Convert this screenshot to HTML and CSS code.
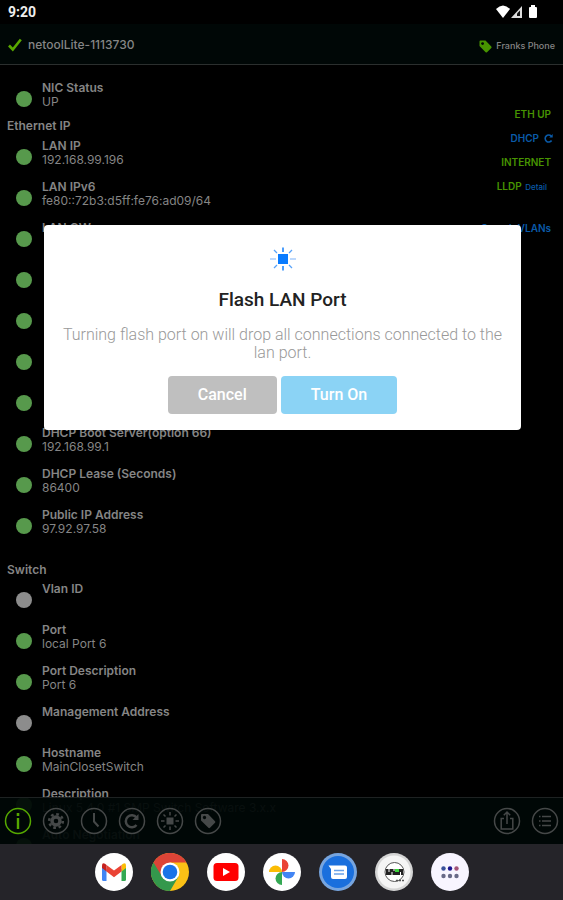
FILE: index.html
```html
<!DOCTYPE html>
<html lang="en">
<head>
<meta charset="utf-8">
<meta name="viewport" content="width=device-width, initial-scale=1">
<title>netoolLite</title>
<link rel="stylesheet" href="styles.css">
</head>
<body>
<div class="status-bar">
  <span>9:20</span>
  <svg class="status-icons" width="42" height="14" viewBox="0 0 42 14" fill="#fff">
    <path d="M0 4Q7-3 14 4L7 13Z"/>
    <path d="M26 1V13H15Z" fill="#ddd"/><path d="M24 5.500V11H21V8.500Z" fill="#111"/>
    <path d="M35 0h4v2h1q1 0 1 1v9q0 1-1 1h-6q-1 0-1-1V3q0-1 1-1h1z"/>
  </svg>
</div>
<header class="header">
  <svg width="14" height="14" viewBox="0 0 14 14"><path d="M1 7.500 4.800 11.500 12.800 1.500" fill="none" stroke="#58a800" stroke-width="2.600"/></svg>
  <h1 class="device">netoolLite-1113730</h1>
  <svg class="tag" width="13" height="13" viewBox="0 0 13 13"><path d="M1.500.500H6.500L12.300 6.500q.7.700 0 1.400L8 12.200q-.7.700-1.400 0L.500 6V1.500q0-1 1-1Z" fill="#479400"/><circle cx="3.600" cy="3.600" r="1.400" fill="#000706"/></svg>
  <span class="phone">Franks Phone</span>
</header>
<main class="content">
  <div class="info">
    <dl class="rows">
      <div class="row"><dt>NIC Status</dt><dd>UP</dd></div>
    </dl>
    <h2 class="section">Ethernet IP</h2>
    <dl class="rows">
      <div class="row"><dt>LAN IP</dt><dd>192.168.99.196</dd></div>
      <div class="row"><dt>LAN IPv6</dt><dd>fe80::72b3:d5ff:fe76:ad09/64</dd></div>
      <div class="row"><dt>LAN GW</dt><dd></dd></div>
      <div class="row"><dt></dt><dd></dd></div>
      <div class="row"><dt></dt><dd></dd></div>
      <div class="row"><dt></dt><dd></dd></div>
      <div class="row"><dt></dt><dd></dd></div>
      <div class="row"><dt>DHCP Boot Server(option 66)</dt><dd>192.168.99.1</dd></div>
      <div class="row"><dt>DHCP Lease (Seconds)</dt><dd>86400</dd></div>
      <div class="row"><dt>Public IP Address</dt><dd>97.92.97.58</dd></div>
    </dl>
    <h2 class="section section-gap">Switch</h2>
    <dl class="rows">
      <div class="row off"><dt>Vlan ID</dt><dd></dd></div>
      <div class="row"><dt>Port</dt><dd>local Port 6</dd></div>
      <div class="row"><dt>Port Description</dt><dd>Port 6</dd></div>
      <div class="row off"><dt>Management Address</dt><dd></dd></div>
      <div class="row"><dt>Hostname</dt><dd>MainClosetSwitch</dd></div>
      <div class="row"><dt>Description</dt><dd>Linux 5.4.0 #1 SMP Switch Software 3.x.x</dd></div>
      <div class="row"><dt>Auto Negotiation</dt><dd></dd></div>
    </dl>
  </div>
  <aside class="links">
    <span>ETH UP</span>
    <a href="#dhcp" class="dhcp">DHCP <svg width="9" height="9" viewBox="0 0 9 9"><path d="M7.300 2.200A3.500 3.500 0 1 0 7.600 6.500" fill="none" stroke="#0a5aa8" stroke-width="1.600"/><path d="M8.700 0V3.500H5.200Z" fill="#0a5aa8"/></svg></a>
    <span>INTERNET</span>
    <span class="lldp">LLDP <a href="#detail">Detail</a></span>
    <a href="#vlans" class="vlans">Search VLANs</a>
  </aside>
  <nav class="toolbar">
    <button class="tool active" aria-label="Info"><svg viewBox="0 0 28 28"><circle cx="14" cy="14" r="12.500"/><path d="M14 11V22" stroke-width="2.400"/><path d="M14 6v3" stroke-width="2.600"/></svg></button>
    <button class="tool" aria-label="Settings"><svg viewBox="0 0 28 28"><circle cx="14" cy="14" r="12.500"/><circle cx="14" cy="14" r="4" stroke-width="3.400"/><circle cx="14" cy="14" r="6.800" stroke-width="2.600" stroke-dasharray="2.670"/></svg></button>
    <button class="tool" aria-label="History"><svg viewBox="0 0 28 28"><circle cx="14" cy="14" r="12.500"/><path d="M14 6V14.500L18.500 19.500" stroke-width="2"/></svg></button>
    <button class="tool" aria-label="Reload"><svg viewBox="0 0 28 28"><circle cx="14" cy="14" r="12.500"/><path d="M18.500 10.500A6 6 0 1 0 18.500 18" stroke-width="2.500"/><path d="M20.500 7V13H14.500Z" class="solid"/></svg></button>
    <button class="tool" aria-label="Flash port"><svg viewBox="0 0 28 28"><circle cx="14" cy="14" r="12.500"/><path d="M10.500 10.500h7v7h-7z" class="solid"/><path d="M14 5v3.500M14 19.500V23M5 14h3.500M19.500 14H23M7.500 7.500l2 2M18.500 18.500l2 2M7.500 20.500l2-2M18.500 9.500l2-2"/></svg></button>
    <button class="tool" aria-label="Tag"><svg viewBox="0 0 28 28"><circle cx="14" cy="14" r="12.500"/><path fill-rule="evenodd" d="M8 7h6l7 7.200q.8.800 0 1.600L16 20.800q-.8.800-1.600 0L7 13.500V8q0-1 1-1Zm2.500 1.800a1.700 1.700 0 1 0 .01 0Z" class="solid"/></svg></button>
    <button class="tool push" aria-label="Share"><svg viewBox="0 0 28 28"><circle cx="14" cy="14" r="12.500"/><path d="M11 11.500H8.200V22H19.800V11.500H17M14 17V5.500M10.800 8.300 14 5l3.200 3.300"/></svg></button>
    <button class="tool" aria-label="Menu"><svg viewBox="0 0 28 28"><circle cx="14" cy="14" r="12.500"/><path d="M11 9.500h9M11 14h9M11 18.500h9M8 9.500h1.500M8 14h1.500M8 18.500h1.500"/></svg></button>
  </nav>
</main>
<footer class="dock">
  <button class="app" aria-label="Gmail"><svg viewBox="0 0 38 38"><circle cx="19" cy="19" r="19" fill="#fff"/><path d="M7 14 11.500 16V28H8.500Q7 28 7 26.500Z" fill="#4285f4"/><path d="M31 14 26.500 16V28h3Q31 28 31 26.500Z" fill="#34a853"/><path d="M26.500 12 28 10.800q3-1.500 3 2V15l-4.500 3.500Z" fill="#fbbc04"/><path d="M11.500 12 19 17.500 26.500 12V18.500L19 24.200 11.500 18.500Z" fill="#ea4335"/><path d="M7 12.800q0-3.500 3-2L11.500 12V18.500L7 15Z" fill="#c5221f"/></svg></button>
  <button class="app" aria-label="Chrome"><svg viewBox="0 0 38 38"><circle cx="19" cy="19" r="19" fill="#fbc116"/><path d="M19 19 2.500 9.500A19 19 0 0 0 19 38L27.500 23.500Z" fill="#34984c"/><path d="M2.500 9.500A19 19 0 0 1 35.500 9.500H19V19L11 23.500Z" fill="#dc4437"/><circle cx="19" cy="19" r="9.500" fill="#fff"/><circle cx="19" cy="19" r="7.300" fill="#1a73e8"/></svg></button>
  <button class="app" aria-label="YouTube"><svg viewBox="0 0 38 38"><circle cx="19" cy="19" r="19" fill="#fff"/><rect x="6.500" y="10" width="25" height="18" rx="3.500" fill="#f00"/><path d="M16 15v8l7-4z" fill="#fff"/></svg></button>
  <button class="app" aria-label="Photos"><svg viewBox="0 0 38 38"><circle cx="19" cy="19" r="19" fill="#fff"/><path d="M19 19V6A6.500 6.500 0 0 1 19 19" fill="#ea4335"/><path d="M19 19H32A6.500 6.500 0 0 1 19 19" fill="#4285f4"/><path d="M19 19V32A6.500 6.500 0 0 1 19 19" fill="#34a853"/><path d="M19 19H6A6.500 6.500 0 0 1 19 19" fill="#fbbc04"/></svg></button>
  <button class="app" aria-label="Messages"><svg viewBox="0 0 38 38"><circle cx="19" cy="19" r="19" fill="#77a5df"/><circle cx="19" cy="19" r="16" fill="#1a6fdd"/><path d="M9.500 12.500H26q2 0 2 2V24q0 2-2 2H14q-2 0-2-2V16Z" fill="#fff"/><path d="M15 17.500h10M15 21h10" stroke="#6aa3ea" stroke-width="1.300"/></svg></button>
  <button class="app" aria-label="netool"><svg viewBox="0 0 38 38"><circle cx="19" cy="19" r="19" fill="#d5d5d5"/><circle cx="19" cy="19" r="16.500" fill="#f5f5f5"/><circle cx="19.500" cy="19" r="9.500" fill="#fff" stroke="#555"/><path d="M11 16h17v6H11z" fill="#222"/><path d="M20 16h4v3h-4z" fill="#3ad53a"/><path d="M14 16v3M17 19v3M25.500 19v3M19 16v2" stroke="#fff"/><path d="M21 27.500h9" stroke="#555" stroke-width="1.500" stroke-dasharray="2 1"/></svg></button>
  <button class="app" aria-label="All apps"><svg viewBox="0 0 38 38"><circle cx="19" cy="19" r="19" fill="#f8f5ff"/><g fill="#686a88"><circle cx="12.500" cy="15.500" r="2.200" fill="#38509a"/><circle cx="19" cy="15.500" r="2.200" fill="#1a1590"/><circle cx="25.500" cy="15.500" r="2.200" fill="#a35378"/><circle cx="12.500" cy="23" r="2.200"/><circle cx="19" cy="23" r="2.200"/><circle cx="25.500" cy="23" r="2.200"/></g></svg></button>
</footer>
<div class="overlay">
  <section class="dialog" role="dialog" aria-labelledby="dialog-title">
    <svg width="26" height="26" viewBox="0 0 26 26"><path d="M8 8h10v10H8z" fill="#0a7cff"/><path d="M13 1.500V6M13 20v4.500" stroke="#3b94fb" stroke-width="1.800"/><path d="M0 13h6M20 13h6" stroke="#a9cdfb" stroke-width="1.500"/><path d="M4 4l3 3M19 19l3 3M4 22l3-3M19 7l3-3" stroke="#5aa3f8" stroke-width="1.300"/></svg>
    <h2 class="dialog-title" id="dialog-title">Flash LAN Port</h2>
    <p class="dialog-text">Turning flash port on will drop all connections connected to the lan port.</p>
    <div class="actions">
      <button class="btn cancel">Cancel</button>
      <button class="btn confirm">Turn On</button>
    </div>
  </section>
</div>
</body>
</html>
```
FILE: styles.css
```css
* { box-sizing: border-box; margin: 0; padding: 0; }

body {
  display: flex;
  flex-direction: column;
  height: 100vh;
  overflow: hidden;
  background: #000;
  color: #858585;
  font-family: Inter, "Liberation Sans", sans-serif;
  font-size: 12px;
  line-height: 14px;
}

a { color: #0a5aa8; text-decoration: none; }
button { border: 0; background: none; font: inherit; }
svg { display: block; flex: none; }

.status-bar {
  display: flex;
  justify-content: space-between;
  align-items: center;
  height: 24px;
  padding: 0 25px 0 8px;
  color: #eee;
  font-family: Roboto, sans-serif;
  font-size: 14px;
  font-weight: 700;
}

.header {
  display: flex;
  align-items: center;
  height: 41px;
  padding: 2px 8px 0;
  background: #000706;
  border-bottom: 1px solid #2b2f2e;
}
.device { margin-left: 6px; font-size: 12px; font-weight: 500; }
.tag { margin: 2px 0 0 auto; }
.phone { margin: 2px 0 0 4px; font-size: 9px; font-weight: 500; }

.content {
  position: relative;
  flex: 1;
  min-height: 0;
  display: flex;
  justify-content: space-between;
  overflow: hidden;
}
.info { padding-top: 16px; }
.row {
  position: relative;
  height: 41px;
  padding-left: 42px;
}
.row::before {
  content: "";
  position: absolute;
  left: 16px;
  top: 10px;
  width: 16px;
  height: 16px;
  border-radius: 50%;
  background: #57994c;
}
.row.off::before { background: #8c8c8c; }
dt { height: 14px; font-weight: 600; }
.section {
  margin: -4px 0 0 7px;
  height: 21px;
  line-height: 16px;
  font-size: 12px;
  font-weight: 600;
}
.section-gap { margin-top: 13px; height: 20px; }

.links {
  display: flex;
  flex-direction: column;
  align-items: flex-end;
  gap: 10px;
  padding: 42px 12px 0 0;
  color: #479400;
  font-size: 10px;
  font-weight: 600;
}
.dhcp { display: flex; align-items: center; gap: 5px; margin-right: -2px; }
.lldp a { font-size: 8px; font-weight: 500; padding: 0 4px 0 1px; }
.vlans { margin-top: 17px; }

.toolbar {
  position: absolute;
  inset: auto 0 0;
  display: flex;
  align-items: center;
  gap: 10px;
  height: 47px;
  padding: 0 4px;
  background: rgba(0, 7, 6, 0.94);
  border-top: 1px solid #1e2222;
}
.tool { width: 28px; height: 28px; color: #454848; }
.tool.active { color: #55a800; }
.tool.push { margin-left: auto; }
.tool svg { fill: none; stroke: currentColor; stroke-width: 1.5; }
.tool .solid { fill: currentColor; stroke: none; }

.dock {
  display: flex;
  justify-content: center;
  align-items: center;
  gap: 18px;
  height: 56px;
  background: #252429;
}
.app { width: 38px; height: 38px; }

.overlay {
  position: absolute;
  inset: 25% 0 auto;
  display: flex;
  justify-content: center;
  padding-left: 2px;
}
.dialog {
  display: flex;
  flex-direction: column;
  align-items: center;
  width: 85%;
  padding: 21px 16px 16px;
  border-radius: 4px;
  background: #fff;
  font-family: Roboto, sans-serif;
  text-align: center;
}
.dialog-title {
  margin-top: 16px;
  color: #222;
  font-size: 19px;
  font-weight: 500;
  line-height: 24px;
}
.dialog-text {
  margin-top: 14px;
  color: #999;
  font-size: 16px;
  font-weight: 300;
  line-height: 18px;
}
.actions { display: flex; gap: 4px; margin-top: 14px; }
.btn {
  height: 38px;
  padding: 0 30px;
  border-radius: 4px;
  color: #fff;
  font-size: 16px;
  font-weight: 500;
}
.cancel { background: #bfbfbf; }
.confirm { background: #8bd3f5; }
```
